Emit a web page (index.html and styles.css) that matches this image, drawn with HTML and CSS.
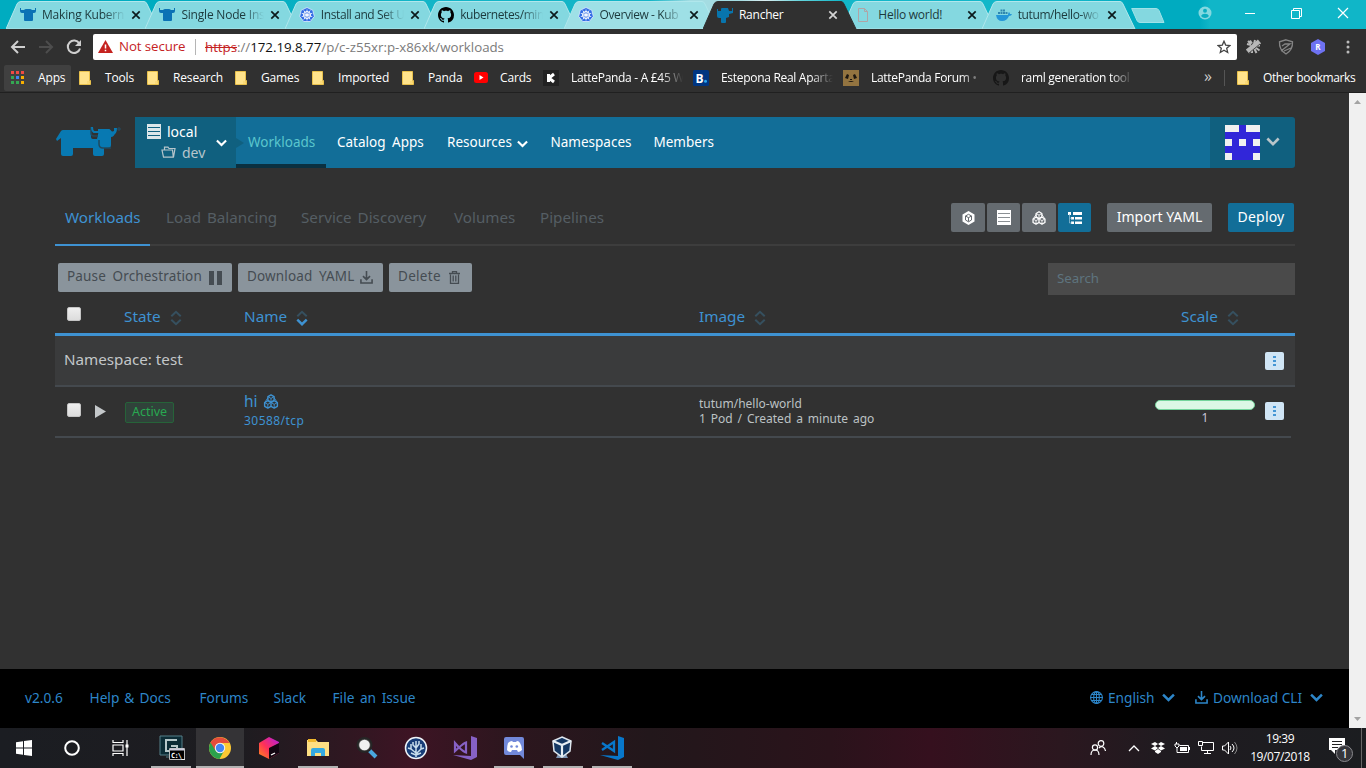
FILE: index.html
```html
<!DOCTYPE html>
<html lang="en">
<head>
<meta charset="utf-8">
<title>Rancher</title>
<link rel="stylesheet" href="styles.css">
</head>
<body>
<svg class="defs" width="0" height="0">
  <symbol id="tab" viewBox="0 0 154 28"><path d="M0 28L11 3Q12 .5 15 .5H138Q140 .5 141 3L153 28Z"/></symbol>
  <symbol id="cow" viewBox="0 0 16 16"><path d="M0 1v3q0 2 2 2h2v7q0 1 1 1h7q1 0 1-1V6h1q2 0 2-2V1h-1v2h-3q-1-1-2-1H6Q5 2 4 3H1V1z" fill="#0b72b5"/></symbol>
  <symbol id="k8s" viewBox="0 0 16 16"><path d="M8 .5l5.8 2.8 1.5 6.2-4 5H4.7l-4-5 1.5-6.2z" fill="#326ce5" stroke="#dcebff" stroke-width=".8"/><g fill="none" stroke="#fff"><circle cx="8" cy="8" r="3.500"/><path d="M8 2.500v11M2.700 6.300l10.600 3.400M13.300 6.300L2.700 9.700M4.800 12.500L11.200 3.500M11.200 12.500L4.800 3.500" stroke-width=".8"/></g></symbol>
  <symbol id="github" viewBox="0 0 16 16"><path d="M8 0C3.58 0 0 3.58 0 8c0 3.54 2.29 6.53 5.47 7.59.4.07.55-.17.55-.38 0-.19-.01-.82-.01-1.49-2.01.37-2.53-.49-2.69-.94-.09-.23-.48-.94-.82-1.13-.28-.15-.68-.52-.01-.53.63-.01 1.08.58 1.23.82.72 1.21 1.87.87 2.33.66.07-.52.28-.87.51-1.07-1.78-.2-3.64-.89-3.64-3.95 0-.87.31-1.59.82-2.15-.08-.2-.36-1.02.08-2.12 0 0 .67-.21 2.2.82.64-.18 1.32-.27 2-.27s1.36.09 2 .27c1.53-1.04 2.2-.82 2.2-.82.44 1.1.16 1.92.08 2.12.51.56.82 1.27.82 2.15 0 3.07-1.87 3.75-3.65 3.95.29.25.54.73.54 1.48 0 1.07-.01 1.93-.01 2.2 0 .21.15.46.55.38A8 8 0 0016 8c0-4.42-3.58-8-8-8z"/></symbol>
  <symbol id="x" viewBox="0 0 10 10"><path d="M1.300 1.300l7.400 7.400M8.700 1.300L1.300 8.700" fill="none" stroke="currentColor" stroke-width="1.700"/></symbol>
  <symbol id="folder" viewBox="0 0 12 14"><path d="M.5.5h10v9h1v4H.5z" fill="#ffe38c" stroke="#e9c14c"/><path d="M9 10v3M10.500 10v2.500" stroke="#f7d267"/></symbol>
  <symbol id="down" viewBox="0 0 12 8"><path d="M1 1.300l5 5 5-5" fill="none" stroke="currentColor" stroke-width="2.300"/></symbol>
  <symbol id="server" viewBox="0 0 14 15"><path d="M0 0h14v15H0z" fill="currentColor"/><path d="M1 3.500h12M1 7.500h12M1 11.500h12" stroke="var(--gap)" stroke-width="1"/></symbol>
  <symbol id="cubes" viewBox="0 0 16 16"><g fill="none" stroke="currentColor" stroke-width="1.500" stroke-linejoin="round"><path d="M8 .9l3.300 1.900v3.900L8 8.600 4.700 6.700V2.800zM4.600 7.200l3.400 1.900v4L4.600 15l-3.400-1.900v-4zM11.400 7.200l3.400 1.900v4L11.400 15 8 13.100v-4z"/><path d="M5 3l3 1.700L11 3M8 4.700v3.500M1.500 9.300l3.100 1.700 3.100-1.700M4.600 11v3.800M8.300 9.300l3.100 1.700 3.100-1.700M11.400 11v3.800M4.700 4L1.700 8.500M11.300 4l3 4.500" stroke-width="1"/></g></symbol>
  <symbol id="sort" viewBox="0 0 12 16"><g fill="none" stroke-width="2"><path d="M1.300 6.300L6 1.800l4.700 4.500"/><path d="M1.300 9.700L6 14.200l4.700-4.500"/></g></symbol>
  <symbol id="dl" viewBox="0 0 14 14"><path d="M7 0v9M3.200 5.500L7 9.300l3.800-3.800M1 9v4h12V9" fill="none" stroke="currentColor" stroke-width="1.700"/></symbol>
</svg>

<header class="browser">
  <div class="tabstrip">
    <div class="tabs">
      <div class="tab"><svg class="shape"><use href="#tab"/></svg><svg class="fav"><use href="#cow"/></svg><span class="title">Making Kubern</span><svg class="close"><use href="#x"/></svg></div>
      <div class="tab"><svg class="shape"><use href="#tab"/></svg><svg class="fav"><use href="#cow"/></svg><span class="title">Single Node Ins</span><svg class="close"><use href="#x"/></svg></div>
      <div class="tab"><svg class="shape"><use href="#tab"/></svg><svg class="fav"><use href="#k8s"/></svg><span class="title tight">Install and Set U</span><svg class="close"><use href="#x"/></svg></div>
      <div class="tab"><svg class="shape"><use href="#tab"/></svg><svg class="fav"><use href="#github"/></svg><span class="title tight">kubernetes/min</span><svg class="close"><use href="#x"/></svg></div>
      <div class="tab themed"><svg class="shape"><use href="#tab"/></svg><svg class="fav"><use href="#k8s"/></svg><span class="title tight">Overview - Kub</span><svg class="close"><use href="#x"/></svg></div>
      <div class="tab active"><svg class="shape"><use href="#tab"/></svg><svg class="fav" viewBox="0 0 16 16"><path d="M0 2h1v2h3V2q0-1 1-1h6l1 3h3V1h1v5l-4 1v3l-3 1v4q0 1-1 1H5q-1 0-1-1v-4H2q-2 0-2-2z" fill="#0875ad"/></svg><span class="title whole">Rancher</span><svg class="close"><use href="#x"/></svg></div>
      <div class="tab"><svg class="shape"><use href="#tab"/></svg><svg class="fav" viewBox="0 0 16 16"><path d="M2.500 1.500h6l3 3v10h-9zM8.500 1.500v3h3" fill="none" stroke="#b0a4a6"/></svg><span class="title whole">Hello world!</span><svg class="close"><use href="#x"/></svg></div>
      <div class="tab"><svg class="shape"><use href="#tab"/></svg><svg class="fav" viewBox="0 0 16 16"><path d="M0 8h12q0-2 1-3 1 1 1 2h2q-.5 2-3 2-2 5-7 5-5 0-6-6z" fill="#2496d8"/><path d="M2 5h2v2H2zm2.500 0h2v2h-2zm2.500 0h2v2H7zm2.500 0h2v2h-2zM4.500 2.500h2v2h-2zm2.500 0h2v2H7z" fill="#2f86ae"/></svg><span class="title tight">tutum/hello-wo</span><svg class="close"><use href="#x"/></svg></div>
    </div>
    <svg class="newtab" viewBox="0 0 34 16"><path d="M.7.500H25q2 0 3 2l5 12H9q-2 0-3-2z"/></svg>
    <div class="window">
      <svg width="14" height="14" viewBox="0 0 14 14"><circle cx="7" cy="7" r="6.500" fill="#84d8e0"/><circle cx="7" cy="4.700" r="2" fill="#0cadc0"/><path d="M3 10q1-2.200 4-2.200T11 10q-1.500 2-4 2t-4-2z" fill="#0cadc0"/></svg>
      <svg width="10" height="12" viewBox="0 0 10 12"><path d="M0 6.500h10" stroke="#fff"/></svg>
      <svg width="11" height="11" viewBox="0 0 11 11" fill="none" stroke="#fff"><path d="M.5 2.500h8v8h-8zM2.500 2.500v-2h8v8h-2"/></svg>
      <svg width="12" height="12" viewBox="0 0 12 12"><path d="M1 1l10 10M11 1L1 11" stroke="#fff" stroke-width="1.200"/></svg>
    </div>
  </div>

  <div class="toolbar">
    <svg class="nav-btn" viewBox="0 0 16 16"><path d="M15 8H2M8 2L2 8l6 6" fill="none" stroke="#cfcfcf" stroke-width="2"/></svg>
    <svg class="nav-btn" viewBox="0 0 16 16"><path d="M1 8h13M8 2l6 6-6 6" fill="none" stroke="#4d4d4d" stroke-width="2"/></svg>
    <svg class="nav-btn" viewBox="0 0 16 16"><path d="M13.300 4.500A6.200 6.200 0 1 0 14 9.500" fill="none" stroke="#cfcfcf" stroke-width="2"/><path d="M15 1v6H9z" fill="#cfcfcf"/></svg>
    <div class="omnibox">
      <svg width="15" height="13" viewBox="0 0 15 13"><path d="M7.500 0L15 13H0z" fill="#c5221f"/><path d="M7.500 4.500v4M7.500 9.700v1.600" stroke="#fff" stroke-width="1.500"/></svg>
      <span class="insecure">Not secure</span>
      <span class="url"><s>https</s>://<b>172.19.8.77</b>/p/c-z55xr:p-x86xk/workloads</span>
      <svg class="star" width="14" height="14" viewBox="0 0 14 14"><path d="M7 1.200l1.700 3.900 4.200.4-3.200 2.800 1 4.200L7 10.300l-3.700 2.200 1-4.200L1.100 5.500l4.200-.4z" fill="none" stroke="#444" stroke-width="1.300"/></svg>
    </div>
    <div class="extensions">
      <svg width="15" height="15" viewBox="0 0 15 15"><g stroke="#b7b7b7"><path d="M1.500 12.500l12-10" stroke-width="5"/><path d="M4 1.500l2 3M1 5l4 1M9 1l-1 4M14 6.500l-4 0M6 14l0-4M10.500 14l-2-4M13.500 11.500l-4-3M2 2l3 3" stroke-width="2"/></g><path d="M3 14L14 5" stroke="#303030" stroke-width=".8"/></svg>
      <svg width="16" height="16" viewBox="0 0 16 16"><path d="M8 .8l6.500 2Q15 11 8 15 1 11 1.500 2.800zM3 12l9-7H7L4 7M6 12l7-3" fill="none" stroke="#858585" stroke-width="1.300"/></svg>
      <svg width="16" height="16" viewBox="0 0 16 16"><path d="M8 0l7 4v8l-7 4-7-4V4z" fill="#6e72f2"/><text x="8" y="11" class="r-mark">R</text></svg>
      <svg width="4" height="14" viewBox="0 0 4 14" fill="#bbb"><circle cx="2" cy="2" r="1.500"/><circle cx="2" cy="7" r="1.500"/><circle cx="2" cy="12" r="1.500"/></svg>
    </div>
  </div>

  <nav class="bookmarks">
    <span class="bm apps"><svg width="13" height="13" viewBox="0 0 13 13"><path d="M0 0h3v3H0zm5 0h3v3H5zm5 0h3v3h-3z" fill="#f04a43"/><path d="M0 5h3v3H0z" fill="#34a853"/><path d="M5 5h3v3H5z" fill="#3f85f4"/><path d="M10 5h3v3h-3z" fill="#f8b000"/><path d="M0 10h3v3H0zm5 0h3v3H5z" fill="#34a853"/><path d="M10 10h3v3h-3z" fill="#f8b000"/></svg><span>Apps</span></span>
    <span class="bm b-tools"><svg class="fold"><use href="#folder"/></svg><span>Tools</span></span>
    <span class="bm b-research"><svg class="fold"><use href="#folder"/></svg><span>Research</span></span>
    <span class="bm b-games"><svg class="fold"><use href="#folder"/></svg><span>Games</span></span>
    <span class="bm b-imported"><svg class="fold"><use href="#folder"/></svg><span>Imported</span></span>
    <span class="bm b-panda"><svg class="fold"><use href="#folder"/></svg><span>Panda</span></span>
    <span class="bm b-cards"><svg width="14" height="11" viewBox="0 0 14 11"><rect width="14" height="11" rx="2.500" fill="#f00"/><path d="M5.500 3l4 2.500-4 2.500z" fill="#fff"/></svg><span>Cards</span></span>
    <span class="bm b-latte"><svg width="16" height="16" viewBox="0 0 16 16"><path d="M0 0h16v16H0z" fill="#222"/><path d="M5.500 4v8M6 8l5-4M6 8l5 4" stroke="#fff" stroke-width="3"/></svg><span class="fade">LattePanda - A £45 W</span></span>
    <span class="bm b-booking"><svg width="16" height="16" viewBox="0 0 16 16"><rect width="16" height="16" rx="1.500" fill="#003580"/><text x="2.500" y="12.500" class="b-mark">B</text><circle cx="12.500" cy="11.300" r="1.500" fill="#28a7f0"/></svg><span class="fade">Estepona Real Aparta</span></span>
    <span class="bm b-forum"><svg width="16" height="16" viewBox="0 0 16 16"><path d="M0 0h16v16H0z" fill="#937440"/><path d="M2 8l2-4 2 1-1 4zM14 8l-2-4-2 1 1 4z" fill="#1d1710"/><path d="M7 9h2v1H7zM5 11q3 2 6 0" fill="#1d1710"/></svg><span class="fade">LattePanda Forum •</span></span>
    <span class="bm b-raml"><svg width="16" height="16" fill="#171717"><use href="#github"/></svg><span class="fade">raml generation tool</span></span>
    <span class="more">»</span>
    <span class="bm other"><svg class="fold"><use href="#folder"/></svg><span>Other bookmarks</span></span>
  </nav>
</header>

<div class="viewport">
  <div class="page">
    <main class="container">
      <div class="masthead">
        <svg class="logo" width="66" height="32" viewBox="0 0 66 32"><path d="M1 12L6 4q1-1 2-1h28v7q0 2 2 2h4l2-9h10q2 0 2 2l3-1V1h1v5q-1 4-4 4v8q0 3-3 3h-4v6q0 2-2 2h-7q-2 0-2-2v-6H18v6q0 2-2 2H8q-2 0-2-2V11l-4 3z" fill="#0879b2"/><path d="M36 0v6q0 3 3 3h4M44 13v4q0 4 4 4h8" fill="none" stroke="#21495e" stroke-width="1.500"/><path d="M37 0q0 4 2 5h5V3h10l4 4q3-1 3-6" fill="none" stroke="#0879b2" stroke-width="2"/><circle cx="64" cy="2" r="1.200" fill="none" stroke="#22516a"/></svg>
        <div class="project">
          <div class="project-names">
            <span class="cluster"><svg width="14" height="15"><use href="#server"/></svg>local</span>
            <span class="namespace"><svg width="15" height="12" viewBox="0 0 15 12"><path d="M2.500 11.200L1 4h10.500l.8 7.200zM3.500 4V1.200h3.500L8 2.500h6l-1.500 8.700" fill="none" stroke="currentColor" stroke-width="1.200"/></svg>dev</span>
          </div>
          <svg class="chev" width="11" height="8"><use href="#down"/></svg>
        </div>
        <nav class="mainnav">
          <a class="n-work current">Workloads</a>
          <a class="n-cat">Catalog Apps</a>
          <a class="n-res">Resources<svg width="11" height="8"><use href="#down"/></svg></a>
          <a class="n-ns">Namespaces</a>
          <a class="n-mem">Members</a>
        </nav>
        <div class="user">
          <svg width="35" height="35" viewBox="0 0 5 5" shape-rendering="crispEdges"><path d="M0 0h5v5H0z" fill="#f0f0f0"/><path d="M2 0h1v1h2v1H0V1h2zM1 2h1v1h1V2h1v1h1v1H4v1H1V4H0V3h1z" fill="#3126d9"/></svg>
          <svg width="14" height="9"><use href="#down"/></svg>
        </div>
      </div>

      <div class="subnav">
        <nav class="subtabs">
          <a class="s-work current">Workloads</a>
          <a class="s-lb">Load Balancing</a>
          <a class="s-sd">Service Discovery</a>
          <a class="s-vol">Volumes</a>
          <a class="s-pipe">Pipelines</a>
        </nav>
        <div class="views">
          <button class="sq"><svg width="13" height="14" viewBox="0 0 13 14"><path d="M6.500 0l6 3.500v7l-6 3.500-6-3.500v-7z" fill="#fff"/><path d="M3.500 5l3 1.700L9.500 5v4l-3 1.800-3-1.800zM6.500 6.500v4M3.500 5l3-1.700L9.500 5" fill="none" stroke="#656b70" stroke-width="1"/></svg></button>
          <button class="sq short"><svg width="14" height="15"><use href="#server"/></svg></button>
          <button class="sq"><svg width="14" height="14"><use href="#cubes"/></svg></button>
          <button class="sq short on"><svg width="14" height="12" viewBox="0 0 14 12"><path d="M0 0h3v3H0zM5 0h9v3H5zM3 5h3v2.500H3zM7 5h7v2.500H7zM3 9.500h3V12H3zM7 9.500h7V12H7z" fill="#fff"/><path d="M1.500 2v9H4M1.500 6.200H4" fill="none" stroke="#9cc5d8" stroke-width=".7"/></svg></button>
        </div>
        <button class="import">Import YAML</button>
        <button class="deploy">Deploy</button>
      </div>

      <div class="actions">
        <button class="a-pause">Pause Orchestration<svg width="13" height="14" viewBox="0 0 13 14"><path d="M0 0h5v14H0zM8 0h5v14H8z" fill="currentColor"/></svg></button>
        <button class="a-dl">Download YAML<svg width="13" height="13"><use href="#dl"/></svg></button>
        <button class="a-del">Delete<svg width="11" height="13" viewBox="0 0 11 13"><path d="M0 2.500h11M3.500 2.500V.7h4v1.800M1.500 3.500v8.800h8V3.500M4.200 4.500v6M6.800 4.500v6" fill="none" stroke="currentColor" stroke-width="1.300"/></svg></button>
        <input class="search" placeholder="Search">
      </div>

      <section class="table">
        <div class="row head">
          <span class="lead"><i class="check"></i></span>
          <span class="h-state">State<svg class="sorter"><use href="#sort"/></svg></span>
          <span class="h-name">Name<svg class="sorter" viewBox="0 0 12 16"><path d="M1.300 6.300L6 1.800l4.700 4.500" fill="none" stroke-width="2"/><path class="sorted" d="M1.300 9.700L6 14.200l4.700-4.500" fill="none" stroke-width="2.500"/></svg></span>
          <span class="h-image">Image<svg class="sorter"><use href="#sort"/></svg></span>
          <span class="h-scale">Scale<svg class="sorter"><use href="#sort"/></svg></span>
        </div>
        <div class="group"><span>Namespace: test</span><button class="menu"><i></i><i></i><i></i></button></div>
        <div class="row item">
          <span class="lead"><i class="check"></i><svg width="11" height="13" viewBox="0 0 11 13"><path d="M0 0l11 6.500L0 13z" fill="#c4c8ca"/></svg></span>
          <span class="state"><span class="badge">Active</span></span>
          <span class="name"><a>hi<svg width="16" height="15"><use href="#cubes"/></svg></a><a class="port">30588/tcp</a></span>
          <span class="image"><span>tutum/hello-world</span><span class="pods">1 Pod / Created a minute ago</span></span>
          <span class="scale"><i class="bar"></i>1</span>
          <button class="menu"><i></i><i></i><i></i></button>
        </div>
      </section>
    </main>
    <footer class="footer">
      <a class="f-ver">v2.0.6</a><a class="f-help">Help &amp; Docs</a><a class="f-forum">Forums</a><a class="f-slack">Slack</a><a class="f-issue">File an Issue</a>
      <a class="f-lang"><svg width="13" height="13" viewBox="0 0 13 13"><g fill="none" stroke="currentColor" stroke-width="1.100"><circle cx="6.500" cy="6.500" r="5.900"/><ellipse cx="6.500" cy="6.500" rx="2.800" ry="5.900"/><path d="M6.500 0v13M0 6.500h13M1.500 3.500h10M1.500 9.500h10"/></g></svg><span>English</span><svg width="13" height="9"><use href="#down"/></svg></a>
      <a class="f-cli"><svg width="13" height="13"><use href="#dl"/></svg><span>Download CLI</span><svg width="13" height="9"><use href="#down"/></svg></a>
    </footer>
  </div>
  <div class="scrollbar"><svg width="7" height="4" viewBox="0 0 7 4"><path d="M3.500 0L7 4H0z"/></svg><svg width="7" height="4" viewBox="0 0 7 4"><path d="M0 0h7L3.500 4z"/></svg></div>
</div>

<footer class="taskbar">
  <div class="sys">
    <span><svg width="16" height="16" viewBox="0 0 16 16" fill="#fff"><path d="M0 2.200l7-1v6.300H0zM8 1l8-1v7.500H8zM0 8.500h7v6.300l-7-1zM8 8.500h8V16l-8-1z"/></svg></span>
    <span><svg width="16" height="16" viewBox="0 0 16 16"><circle cx="8" cy="8" r="6.800" fill="none" stroke="#fff" stroke-width="2"/></svg></span>
    <span><svg width="17" height="16" viewBox="0 0 17 16" fill="none" stroke="#fff" stroke-width="1.200"><path d="M1 0v2.500h10V0M1 16v-2.500h10V16M1 5h10v6H1zM15 0v16"/><path d="M13.500 4.500h3v3h-3z" fill="#fff" stroke="none"/></svg></span>
  </div>
  <div class="apps-run">
    <span class="run"><svg class="console" width="26" height="26" viewBox="0 0 26 26"><path d="M1 1h22v19H1z" fill="#0c2c36" stroke="#557f88"/><path d="M18 5H7v11h11v-5h-6" fill="none" stroke="#b6c7c9" stroke-width="2"/><path d="M7 22h5" stroke="#557f88"/><path d="M10.500 13.500h15v11h-15z" fill="#000" stroke="#bbb"/><path d="M11 14.500h14" stroke="#ccd" stroke-width="2"/><text x="12" y="22.500" class="cmd">C:\_</text></svg></span>
    <span class="run front"><svg width="22" height="22" viewBox="0 0 22 22"><circle cx="11" cy="11" r="11" fill="#fcc934"/><path d="M1.500 5.500A11 11 0 0 0 10.500 22L15.500 13 11 11z" fill="#2ba24c"/><path d="M1.500 5.500A11 11 0 0 1 20.500 6H11L6.500 13.500z" fill="#e44c3c"/><circle cx="11" cy="11" r="5.200" fill="#f7f5ef"/><circle cx="11" cy="11" r="4.200" fill="#4285f4"/></svg></span>
    <span><svg width="20" height="22" viewBox="0 0 20 22"><defs><linearGradient id="tb" x1="0" y1="1" x2="1" y2="0"><stop stop-color="#ff8c1a"/><stop offset=".45" stop-color="#ff3158"/><stop offset="1" stop-color="#b01ce8"/></linearGradient></defs><path d="M10 0l10 5v11l-10 6L0 17V6z" fill="url(#tb)"/><path d="M10 11l10-5v10l-10 6z" fill="#120611"/><path d="M12 18l4-2" stroke="#fff" stroke-width="1.300"/></svg></span>
    <span class="run"><svg width="22" height="20" viewBox="0 0 22 20"><path d="M0 2h9l2 2h11v14H0z" fill="#ffdf83"/><path d="M1 1h8v3H1z" fill="#f0b72d"/><path d="M4 18v-6q0-2 2-2h10q2 0 2 2v6h-4v-3H8v3z" fill="#35a9e1"/></svg></span>
    <span><svg width="22" height="22" viewBox="0 0 22 22"><path d="M13 13l7 7" stroke="#49a7df" stroke-width="4"/><circle cx="8.500" cy="8" r="7" fill="#555" stroke="#262626" stroke-width="2"/><circle cx="8.500" cy="8" r="5.300" fill="#efefef"/></svg></span>
    <span><svg width="24" height="24" viewBox="0 0 24 24"><circle cx="12" cy="12" r="10.500" fill="#173d78" stroke="#edf3f8" stroke-width="1.500"/><path d="M12 21V5M12 17l-5-4V8M7 13l-3-1M12 18l5-5V8M17 13l3-1M12 12l-3-3V6M12 12l3-4V5M12 19l-5-2M12 19l5-2" fill="none" stroke="#c7ddec" stroke-width="1.500"/></svg></span>
    <span><svg width="24" height="24" viewBox="0 0 24 24"><path d="M18 0l6 2v19l-6 3L0 19l18 1z" fill="#8661c5"/><path d="M2 7v8l4-3.500q5-4.500 7-5v10q-2-.5-7-5z" fill="none" stroke="#8661c5" stroke-width="2.200"/></svg></span>
    <span class="run"><svg width="20" height="22" viewBox="0 0 20 22"><path d="M2 0h16q2 0 2 2v20l-4-4H2q-2 0-2-2V2q0-2 2-2z" fill="#7289da"/><path d="M4 6q2-2 4-2l1 1h3l1-1q2 0 3 2 2 3 2 7-2 2-4 2l-1-2H8l-1 2q-3 0-4-2 0-4 1-7z" fill="#fff"/><circle cx="7.500" cy="9.500" r="1.300" fill="#7289da"/><circle cx="12.800" cy="9.500" r="1.300" fill="#7289da"/></svg></span>
    <span class="run"><svg class="vbox" width="22" height="24" viewBox="0 0 22 24"><path d="M7 18l-2 4h12l-2-4" fill="#7d94b3"/><path d="M11 1l9 4-1 10-8 6-8-6L2 5z" fill="#153864" stroke="#dde6ee" stroke-width="1.500"/><path d="M2 5l9 4 9-4M11 9v11" fill="none" stroke="#e7eef4" stroke-width="2.200"/></svg></span>
    <span class="run"><svg width="24" height="24" viewBox="0 0 24 24"><path d="M18 0l6 2v19l-6 3L0 19l18 1z" fill="#0877ca"/><path d="M2 7l12 8V6L2 14" fill="none" stroke="#0877ca" stroke-width="2.300"/></svg></span>
  </div>
  <div class="tray">
    <svg class="people" width="16" height="16" viewBox="0 0 16 16" fill="none" stroke="#fff" stroke-width="1.200"><circle cx="11" cy="3.500" r="2.800"/><circle cx="5" cy="7.500" r="2.600"/><path d="M1 15q0-5 4-5t4 5M9 8q2-2 4-1t2.500 4"/></svg>
    <svg width="12" height="7" viewBox="0 0 12 7"><path d="M1 6l5-5 5 5" fill="none" stroke="#fff" stroke-width="1.300"/></svg>
    <svg class="dropbox" width="14" height="12" viewBox="0 0 14 12" fill="#fff"><path d="M4 0l3 2-3 2-4-2zM10 0l4 2-4 2-3-2zM4 4l3 2-3 2.500L0 6.500zM10 4l4 2.500-4 2L7 6zM4 9l3-2 3 2v1l-3 2-3-2z"/></svg>
    <svg width="16" height="12" viewBox="0 0 16 12"><path d="M5.500 3.500h9v7h-9M2.500 0v2M1 2h4v2L3 6 1 4zM3 6v4.500h3" fill="none" stroke="#fff"/><path d="M6 5h7v4H6zM15 5h1v3h-1z" fill="#fff"/></svg>
    <svg width="16" height="14" viewBox="0 0 16 14"><path d="M5 1.500h10.500v8H3.500v-4M.5.500h4v4h-4zM6 12.500h7M9.500 10v2" fill="none" stroke="#fff"/></svg>
    <svg width="16" height="14" viewBox="0 0 16 14"><path d="M.5 5v4h2l4 4V1l-4 4zM8 5q2 2 0 4M10 3q4 4 0 8" fill="none" stroke="#fff"/><path d="M12.500 1q5 6 0 12" fill="none" stroke="#888"/></svg>
    <div class="clock"><span>19:39</span><span>19/07/2018</span></div>
    <svg class="notice" width="25" height="26" viewBox="0 0 25 26"><path d="M0 1h16v12H6v4l-4-4H0z" fill="#fff"/><path d="M3 4.500h10M3 7.500h10M3 10.500h6" stroke="#222"/><circle cx="15.500" cy="16.500" r="8" fill="#35353a" stroke="#8a8a8e"/><text x="12" y="21" class="count">1</text></svg>
    <i class="peek"></i>
  </div>
</footer>
</body>
</html>
```
FILE: styles.css
```css
* { box-sizing: border-box; }
body { margin: 0; width: 1366px; height: 768px; overflow: hidden; display: flex; flex-direction: column; background: #313131; font-family: "Noto Sans", sans-serif; }
svg { display: block; flex: none; }
.defs { position: absolute; }
button, input { font: inherit; border: 0; margin: 0; padding: 0; }

/* Browser chrome */
.browser { flex: none; font-family: "Open Sans", "Noto Sans", sans-serif; font-size: 12px; background: #303030; }
.tabstrip { height: 29px; display: flex; background: linear-gradient(90deg, #00acc0 0 240px, #12b5c7 380px 650px, #a4dce2 690px 740px, #dceef1 765px, #64d4dc 800px, #12b7c9 840px 1070px, #00abc0 1130px 1200px, #10b6c8 1210px); }
.tabs { display: flex; padding-left: 6px; }
.tab { position: relative; width: 139.4px; padding: 1px 0 0 14px; display: flex; align-items: center; color: #1c393c; }
.shape { position: absolute; left: 0; top: 1px; width: 154px; height: 28px; fill: #84d8e0; stroke: #b0e7ec; stroke-width: 1; }
.themed .shape { fill: #9ee0e6; }
.active { z-index: 2; color: #fff; }
.active .shape { fill: #303030; stroke: #303030; }
.fav { position: relative; width: 16px; height: 16px; margin-right: 6px; }
.title { position: relative; width: 83px; margin-top: -2px; white-space: nowrap; letter-spacing: -.2px; mask-image: linear-gradient(90deg, #000 75%, transparent 100%); }
.tight { letter-spacing: -.4px; }
.whole { mask-image: none; letter-spacing: -.25px; }
.close { position: relative; width: 10px; height: 10px; margin-left: 6px; color: #0c1b1d; }
.active .close { color: #d5d5d5; }
.newtab { width: 34px; height: 16px; margin: 8px 0 0 10px; fill: #84d8e0; stroke: #9fe2e8; }
.window { margin-left: auto; height: 26px; display: flex; align-items: center; padding-right: 17px; }
.window svg:nth-child(1) { margin-right: 33px; }
.window svg:nth-child(2) { margin-right: 36px; }
.window svg:nth-child(3) { margin-right: 35px; }
.toolbar { height: 34px; display: flex; align-items: center; padding: 1px 13px 0 10px; }
.nav-btn { width: 16px; height: 16px; margin-right: 12px; }
.omnibox { width: 1144px; height: 26px; margin-left: -1px; background: #fff; border-radius: 2px; display: flex; align-items: center; padding: 0 6px 0 5px; font-size: 13.300px; }
.insecure { color: #c5221f; width: 77px; margin-left: 6px; padding-right: 8px; height: 16px; line-height: 15px; border-right: 1px solid #b5b5b5; white-space: nowrap; letter-spacing: -.1px; }
.url { margin-left: 9px; color: #7b7b7b; letter-spacing: -.02px; }
.url s { color: #c5221f; }
.url b { color: #111; font-weight: 400; }
.star { margin-left: auto; }
.extensions { flex: 1; display: flex; align-items: center; padding-left: 9px; gap: 16.500px; }
.extensions svg:last-child { margin-left: 3px; }
.r-mark { font: 700 8px "Open Sans", sans-serif; fill: #fff; text-anchor: middle; }
.bookmarks { height: 30px; border-bottom: 1px solid #202020; display: flex; align-items: center; color: #fff; padding-left: 4px; white-space: nowrap; }
.bm { display: flex; align-items: center; flex: none; letter-spacing: -.15px; }
.bm svg { margin-right: 12px; }
.apps { width: 67px; height: 26px; padding-left: 7px; background: #404040; border-radius: 2px; margin-right: 8px; }
.apps svg { margin-right: 14px; }
.fold { width: 12px; height: 14px; }
.bm .fold { margin-right: 14px; }
.b-tools { width: 68px; } .b-research { width: 88px; } .b-games { width: 77px; } .b-imported { width: 90px; } .b-panda { width: 72px; }
.b-cards { width: 69px; } .b-latte { width: 150px; } .b-booking { width: 150px; } .b-forum { width: 150px; } .b-raml { width: 211px; }
.fade { width: 112px; letter-spacing: -.3px; mask-image: linear-gradient(90deg, #000 80%, transparent 100%); }
.b-mark { font: 700 12px "Open Sans", sans-serif; fill: #fff; }
.more { width: 20px; margin-top: -3px; font-size: 16px; color: #ccc; line-height: 20px; }
.other { height: 16px; border-left: 1px solid #555; padding-left: 12px; letter-spacing: -.42px; }

/* Page */
.viewport { flex: 1; min-height: 0; display: flex; }
.page { width: 1349px; display: flex; flex-direction: column; }
.container { flex: 1; padding: 24px 54px 0 55px; }
.masthead { height: 51px; display: flex; }
.logo { margin: 10px 14px 0 0; }
.project { width: 101px; background: #10607f; display: flex; align-items: center; padding-left: 12px; color: #fff; font-size: 14px; position: relative; --gap: #10607f; }
.project::after { content: ""; position: absolute; left: 101px; top: 21px; border: 5px solid transparent; border-left: 8px solid #10607f; }
.project-names { width: 69px; margin-top: -2px; }
.cluster, .namespace { display: flex; align-items: center; height: 21px; gap: 6px; }
.cluster svg { color: #dbe6ea; }
.namespace { padding-left: 14px; color: #b7c6cc; }
.mainnav { flex: 1; background: #126e98; display: flex; color: #fff; font-size: 13.500px; word-spacing: 3px; white-space: nowrap; }
.mainnav a { display: flex; align-items: center; padding: 0 0 1px 11px; }
.mainnav svg { margin: 4px 0 0 5px; }
.mainnav .current { color: #5ac6cd; padding: 3px 0 0 12px; border-bottom: 4px solid #0a3040; }
.n-work { width: 90px; } .n-cat { width: 110px; } .n-res { width: 103.500px; } .n-ns { width: 103px; }
.user { width: 85px; background: #10607f; border-radius: 0 3px 3px 0; display: flex; align-items: center; padding-left: 15px; gap: 6px; color: #b9c5ca; }
.user svg:last-child { margin-top: -2px; }
.subnav { height: 78px; border-bottom: 2px solid #3d3d3d; display: flex; align-items: flex-start; padding-top: 35px; }
.subtabs { display: flex; font-size: 15.200px; word-spacing: 2px; color: #555e64; align-self: stretch; margin: -10px 0 -2px; }
.subtabs a { height: 53px; line-height: 49px; white-space: nowrap; }
.subtabs .current { color: #3e92d2; border-bottom: 2px solid #3e92d2; padding-left: 10px; margin-right: 16px; }
.s-work { width: 95px; } .s-lb { width: 135px; } .s-sd { width: 153px; } .s-vol { width: 86px; } .s-pipe { width: 64px; }
.views { display: flex; gap: 2px; margin-left: auto; }
.subnav button { height: 29px; border-radius: 2px; background: #656b70; color: #fff; font-size: 14px; }
.subnav .sq { width: 34px; display: flex; align-items: center; justify-content: center; --gap: #8b9094; }
.subnav .short { width: 33px; }
.subnav .on, .subnav .deploy { background: #126e98; }
.subnav .import { width: 105px; margin: 0 16px; line-height: 26px; padding-bottom: 2px; }
.subnav .deploy { width: 66px; margin-right: 1px; line-height: 26px; padding-bottom: 2px; letter-spacing: .2px; }
.actions { display: flex; gap: 6px; padding: 17px 0 0 3px; height: 53px; }
.actions button { height: 29px; border-radius: 2px; background: #8a949c; color: #454c52; font-size: 13.500px; letter-spacing: .15px; word-spacing: 3px; display: flex; align-items: center; padding: 0 0 3px 9px; white-space: nowrap; }
.actions button svg { margin: 3px 0 0 auto; }
.actions .a-pause { width: 174px; padding-right: 10px; } .actions .a-dl { width: 145px; padding-right: 10px; } .actions .a-del { width: 83px; padding-right: 12px; letter-spacing: .3px; }
.actions .search { width: 247px; height: 32px; margin-left: auto; background: #4a4a4a; padding: 0 9px 2px; font-size: 13.300px; }
.search::placeholder { color: #5e747f; }
.row { display: grid; grid-template-columns: 69px 120px 455px 456px 100px 10px 19px; }
.head { height: 37px; border-bottom: 3px solid #3e92d2; color: #3e92d2; font-size: 15.300px; }
.head > span { display: flex; align-items: center; line-height: 20px; padding-bottom: 0; }
.head .h-scale { padding-left: 26px; }
.sorter { width: 12px; height: 16px; margin: 3px 0 0 9px; stroke: #36505f; }
.sorted { stroke: #3e92d2; }
.lead { display: flex; align-items: center; padding-left: 12px; }
.check { width: 14px; height: 14px; border-radius: 2px; border: 1px solid #c5c5c5; background: linear-gradient(#eee, #dcdcdc); margin-bottom: 4px; }
.lead svg { margin-left: 14px; }
.group { height: 51px; background: #3a3b3c; border-bottom: 2px solid #44494e; display: flex; align-items: center; justify-content: space-between; padding: 0 11px 3px 9px; color: #c3c7c9; font-size: 15.200px; }
.menu { width: 19px; height: 18px; border-radius: 2px; background: #d0e5f5; display: flex; flex-direction: column; align-items: center; justify-content: center; gap: 2px; }
.group .menu { margin-top: 4px; }
.menu i { width: 3px; height: 2px; background: #4496d4; }
.item { height: 51px; width: 1236px; border-bottom: 2px solid #44494e; align-items: center; }
.item .lead .check { margin-bottom: 3px; }
.item .menu { grid-column: 7; margin: 0 0 1px; }
.state { margin-top: -2px; }
.badge { display: inline-block; margin-left: 1px; width: 49px; height: 21px; border: 1px solid #266339; border-radius: 2px; background: #30423a; color: #28a951; font-size: 12.500px; line-height: 18px; text-align: center; }
.name { color: #3e92d2; font-size: 15.500px; line-height: 21px; margin-top: -3px; }
.name a { display: flex; align-items: center; }
.name svg { margin: 1px 0 0 5px; }
.name .port { font-size: 12px; line-height: 18px; letter-spacing: .45px; }
.image { font-size: 12px; line-height: 15px; color: #bcc2c4; display: flex; flex-direction: column; margin-top: -2px; }
.pods { word-spacing: 1.800px; }
.scale { font-size: 12px; line-height: 16px; color: #c8c4d6; text-align: center; margin-top: 2px; }
.bar { display: block; height: 10px; border-radius: 5px; border: 1px solid #74d49b; background: #dcf7e5; }
.footer { height: 59px; background: #000; color: #2d86c9; font-size: 13.700px; display: flex; align-items: center; padding: 0 26px 3px 25px; white-space: nowrap; }
.f-ver { width: 64.500px; } .f-help { width: 110px; word-spacing: 1.500px; } .f-forum { width: 74px; } .f-slack { width: 59px; } .f-issue { word-spacing: 2px; }
.f-lang, .f-cli { display: flex; align-items: center; }
.f-lang { margin-left: auto; width: 105px; }
.f-cli { width: 128px; }
.f-lang span, .f-cli span { margin: 0 auto 0 5px; }
.f-lang { padding-right: 20px; }
.scrollbar { width: 17px; background: #f0f0f0; display: flex; flex-direction: column; justify-content: space-between; align-items: center; padding: 7px 0; fill: #a3a3a3; }

/* Taskbar */
.taskbar { flex: none; height: 40px; display: flex; background: linear-gradient(90deg, #1b1d22 0, #1d1c20 240px, #301721 350px, #3d1424 410px, #2c161e 510px, #22171b 650px, #2a131b 830px, #35101e 930px, #2b171f 1060px, #1f1b20 1170px, #1b1d20); color: #fff; }
.sys { display: flex; margin-right: 3px; }
.sys span, .apps-run span { width: 48px; height: 40px; display: flex; align-items: center; justify-content: center; }
.apps-run { display: flex; gap: 1px; }
.apps-run .run { background: linear-gradient(#b3b3b3, #b3b3b3) center bottom / 40px 2px no-repeat; }
.apps-run .front { background: linear-gradient(#b3b3b3, #b3b3b3) center bottom / 48px 2px no-repeat #343336; }
.console { margin-left: 2px; }
.vbox { margin-right: 3px; }
.cmd { font: 700 7px "DejaVu Sans Mono", monospace; fill: #fff; letter-spacing: -.8px; }
.tray { margin-left: auto; display: flex; align-items: center; gap: 8px; }
.tray .people { margin-right: 14px; }
.tray .dropbox { margin: 0 1px 0 3px; }
.clock { width: 64px; margin: 0 9px 0 2px; display: flex; flex-direction: column; align-items: center; font: 12px/18px "Open Sans", sans-serif; letter-spacing: -.4px; }
.notice { margin: 3px -1px 0 0; }
.count { font: 13px "Open Sans", sans-serif; fill: #fff; }
.peek { width: 5px; height: 40px; border-left: 1px solid #666; }
```
